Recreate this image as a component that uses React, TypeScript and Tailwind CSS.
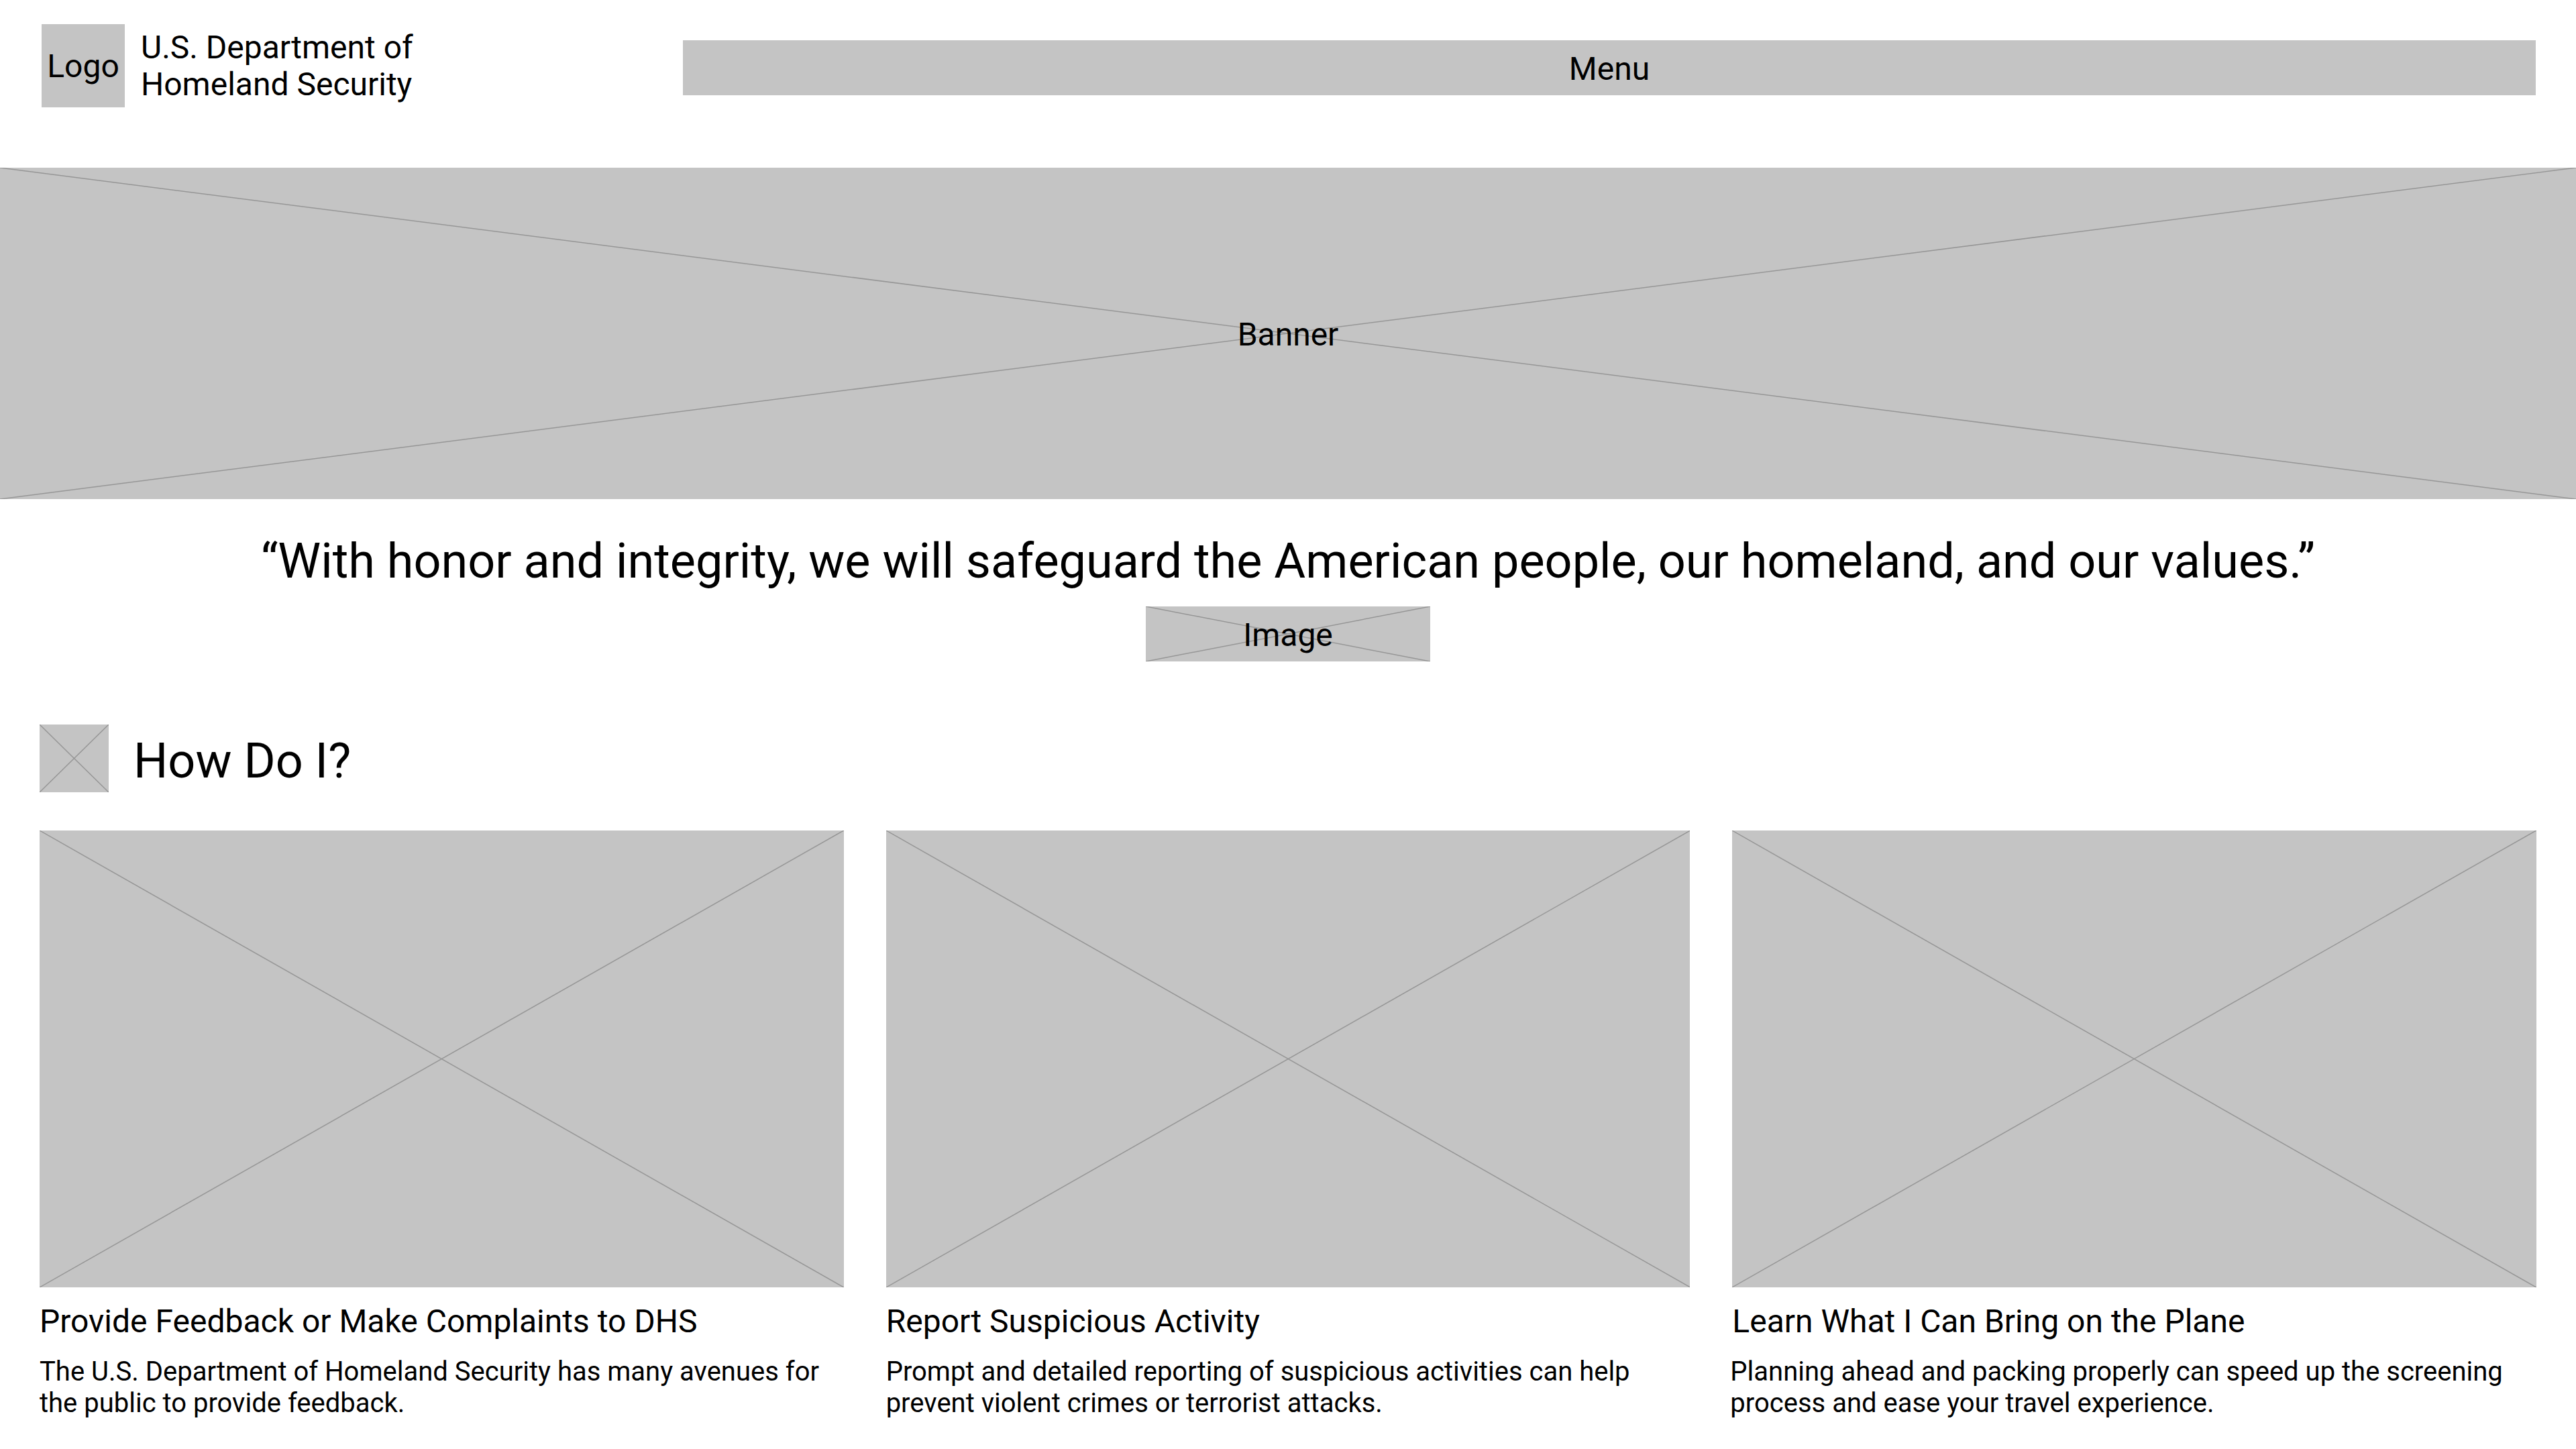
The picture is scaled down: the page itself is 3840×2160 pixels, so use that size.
import React from "react";

function Cross({ className = "", children }: { className?: string; children?: React.ReactNode }) {
  return (
    <div className={`relative bg-[#c4c4c4] flex items-center justify-center ${className}`}>
      <svg
        className="absolute inset-0 w-full h-full"
        viewBox="0 0 100 100"
        preserveAspectRatio="none"
      >
        <line x1="0" y1="0" x2="100" y2="100" stroke="#969696" strokeWidth="1.5" vectorEffect="non-scaling-stroke" />
        <line x1="100" y1="0" x2="0" y2="100" stroke="#969696" strokeWidth="1.5" vectorEffect="non-scaling-stroke" />
      </svg>
      {children ? <span className="relative pt-[4px]">{children}</span> : null}
    </div>
  );
}

const cards = [
  {
    title: "Provide Feedback or Make Complaints to DHS",
    desc: "The U.S. Department of Homeland Security has many avenues for the public to provide feedback.",
    descClass: "",
  },
  {
    title: "Report Suspicious Activity",
    desc: "Prompt and detailed reporting of suspicious activities can help prevent violent crimes or terrorist attacks.",
    descClass: "",
  },
  {
    title: "Learn What I Can Bring on the Plane",
    desc: "Planning ahead and packing properly can speed up the screening process and ease your travel experience.",
    descClass: "-ml-[3px]",
  },
];

export default function App() {
  return (
    <div className="w-[3840px] min-h-[2160px] bg-white text-black font-['Roboto',_'Liberation_Sans',_sans-serif]">
      {/* Header */}
      <header className="flex items-start pt-[36px] pl-[62px] pr-[60px]">
        <div className="w-[124px] h-[124px] bg-[#c4c4c4] flex items-center justify-center text-[48px] leading-[56px]">
          <span className="pt-[2px]">Logo</span>
        </div>
        <div className="ml-[24px] mt-[7px] text-[48px] leading-[55px]">
          <div>U.S. Department of</div>
          <div>Homeland Security</div>
        </div>
        <div className="ml-auto mt-[24px] w-[2762px] h-[82px] bg-[#c4c4c4] flex items-center justify-center text-[48px] leading-[56px]">
          <span className="pt-[4px]">Menu</span>
        </div>
      </header>

      {/* Banner */}
      <Cross className="mt-[90px] w-full h-[494px] text-[48px] leading-[56px]">Banner</Cross>

      {/* Quote */}
      <p className="mt-[51px] text-center text-[72px] leading-[84px]">
        “With honor and integrity, we will safeguard the American people, our homeland, and our values.”
      </p>
      <Cross className="mt-[25px] mx-auto w-[424px] h-[82px] text-[48px] leading-[56px]">Image</Cross>

      {/* How Do I */}
      <section className="mt-[94px] px-[59px]">
        <div className="flex items-center">
          <Cross className="w-[103px] h-[101px]" />
          <h2 className="ml-[37px] pt-[8px] text-[72px] leading-[84px] font-normal">How Do I?</h2>
        </div>

        <div className="mt-[57px] grid grid-cols-3 gap-x-[63px]">
          {cards.map((c) => (
            <div key={c.title} className="flex flex-col">
              <Cross className="w-full h-[681px]" />
              <h3 className="mt-[23px] text-[48px] leading-[56px] font-normal">{c.title}</h3>
              <p className={`mt-[23px] text-[40px] leading-[47px] ${c.descClass}`}>{c.desc}</p>
            </div>
          ))}
        </div>
      </section>
    </div>
  );
}
